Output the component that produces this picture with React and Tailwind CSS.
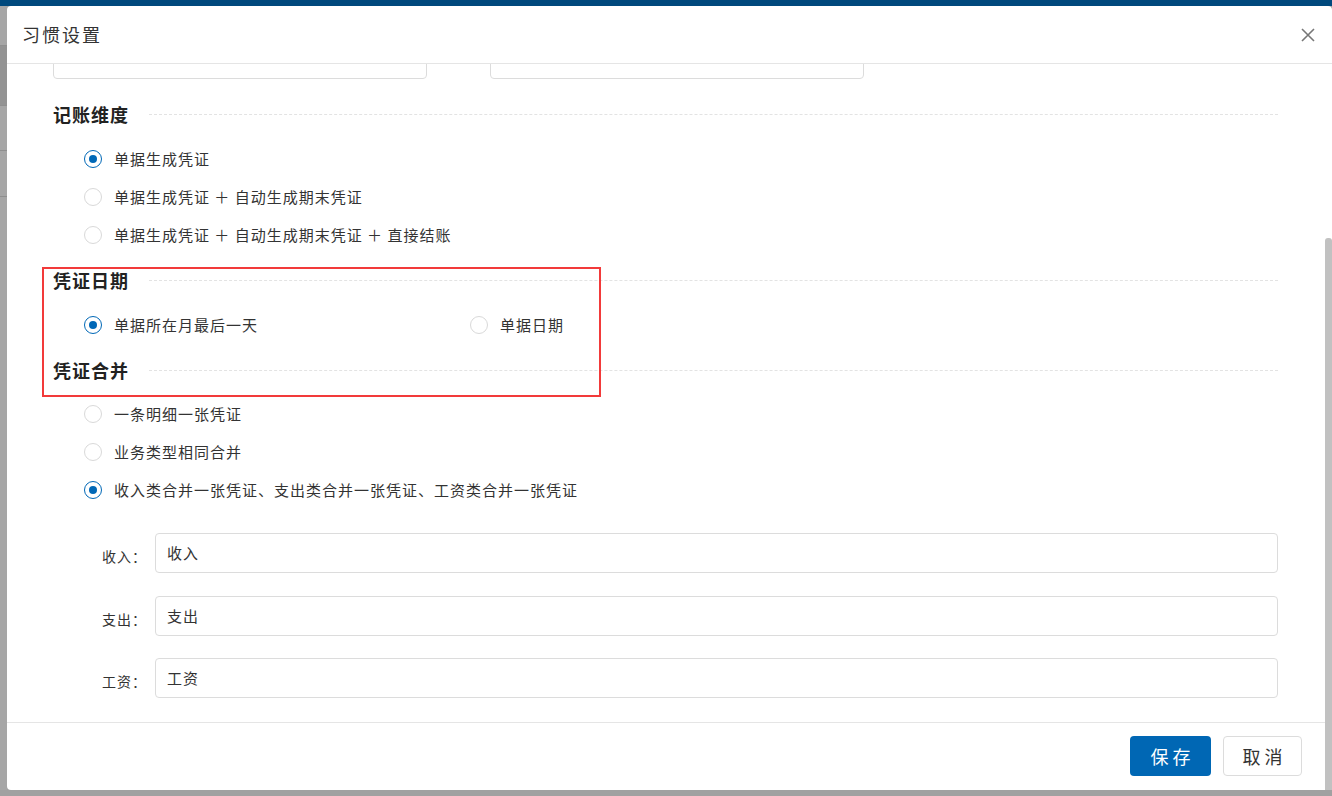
import React from "react";

const font = { fontFamily: '"Noto Sans CJK SC", "Noto Sans", sans-serif' };

const Radio = ({ checked, label, className = "" }) => (
  <label className={`flex items-center h-[38px] cursor-pointer ${className}`}>
    <span
      className={`w-[18px] h-[18px] rounded-full border flex items-center justify-center bg-white ${
        checked ? "border-[#0068b7]" : "border-[#d9d9d9]"
      }`}
    >
      {checked && <span className="w-[8px] h-[8px] rounded-full bg-[#0068b7]" />}
    </span>
    <span className="ml-[12px] text-[15px] tracking-[1px] text-[#333] whitespace-pre">{label}</span>
  </label>
);

const SectionTitle = ({ title }) => (
  <div className="flex items-center h-[22px]">
    <span className="text-[18px] tracking-[1px] font-bold text-[#222] leading-[22px]">{title}</span>
    <span className="flex-1 ml-[20px] border-t border-dashed border-[#e3e3e3]" />
  </div>
);

const FieldRow = ({ label, value, className = "" }) => (
  <div className={`flex items-center ${className}`}>
    <span className="w-[94px] text-right text-[14px] tracking-[1px] text-[#333] pt-[6px]">{label}：</span>
    <div className="ml-[8px] flex-1 h-[40px] border border-[#dcdcdc] rounded-[4px] flex items-center px-[11px] text-[15px] tracking-[1px] text-[#333]">
      {value}
    </div>
  </div>
);

export default function App() {
  return (
    <div className="relative w-[1332px] h-[796px] overflow-hidden bg-[#a1a1a1]" style={font}>
      <div className="h-[6px] bg-[#00497d]" />
      <div className="flex h-[784px]">
        <div className="w-[7px] flex flex-col">
          <div className="h-[40px] border-b border-[#8f8f8f] bg-[#a6a6a6]" />
          <div className="h-[60px] border-b border-[#8f8f8f] bg-[#939393]" />
          <div className="h-[45px] border-b border-[#8f8f8f] bg-[#a6a6a6]" />
          <div className="h-[46px] border-b border-[#8f8f8f] bg-[#a6a6a6]" />
          <div className="flex-1 bg-[#a6a6a6]" />
        </div>
        <div className="flex-1 bg-white rounded-[4px] flex flex-col overflow-hidden">
          <div className="h-[58px] border-b border-[#e5e5e5] flex items-center justify-between pl-[15px] pr-[16px]">
            <span className="text-[18px] tracking-[2px] text-[#333]">习惯设置</span>
            <svg width="16" height="16" viewBox="0 0 16 16" className="text-[#777]">
              <path d="M2 2 L14 14 M14 2 L2 14" stroke="currentColor" strokeWidth="1.6" fill="none" />
            </svg>
          </div>

          <div className="flex-1 overflow-hidden pl-[46px]">
            <div className="w-[1225px]">
              <div className="flex gap-[63px] -mt-[25px]">
                <div className="w-[374px] h-[40px] border border-[#dcdcdc] rounded-[4px]" />
                <div className="w-[374px] h-[40px] border border-[#dcdcdc] rounded-[4px]" />
              </div>

              <div className="mt-[24px]">
                <SectionTitle title="记账维度" />
              </div>
              <div className="mt-[15px] pl-[31px]">
                <Radio checked label="单据生成凭证" />
                <Radio label="单据生成凭证 ＋ 自动生成期末凭证" />
                <Radio label="单据生成凭证 ＋ 自动生成期末凭证 ＋ 直接结账" />
              </div>

              <div className="mt-[15px]">
                <SectionTitle title="凭证日期" />
              </div>
              <div className="mt-[15px] pl-[31px] flex">
                <Radio checked label="单据所在月最后一天" className="w-[386px]" />
                <Radio label="单据日期" />
              </div>

              <div className="mt-[15px]">
                <SectionTitle title="凭证合并" />
              </div>
              <div className="mt-[14px] pl-[31px]">
                <Radio label="一条明细一张凭证" />
                <Radio label="业务类型相同合并" />
                <Radio checked label="收入类合并一张凭证、支出类合并一张凭证、工资类合并一张凭证" />
              </div>

              <FieldRow label="收入" value="收入" className="mt-[24px]" />
              <FieldRow label="支出" value="支出" className="mt-[23px]" />
              <FieldRow label="工资" value="工资" className="mt-[22px]" />
            </div>
          </div>

          <div className="h-[68px] border-t border-[#e5e5e5] flex justify-end items-start pt-[13px] pr-[30px] gap-[12px]">
            <button className="w-[81px] h-[40px] rounded-[4px] bg-[#0067b4] text-white text-[18px] tracking-[4px] pl-[4px]">
              保存
            </button>
            <button className="w-[79px] h-[40px] rounded-[4px] border border-[#dcdcdc] bg-white text-[#333] text-[18px] tracking-[4px] pl-[4px]">
              取消
            </button>
          </div>
        </div>
      </div>
      <div className="h-[6px] bg-[#a1a1a1]" />

      {/* scrollbar */}
      <div className="absolute left-[1325px] top-[238px] w-[7px] h-[552px] bg-[#c1c1c1] rounded-t-[3px]" />

      {/* red annotation box */}
      <div className="absolute left-[42px] top-[267px] w-[559px] h-[130px] border-2 border-[#f23a3a]" />
    </div>
  );
}
